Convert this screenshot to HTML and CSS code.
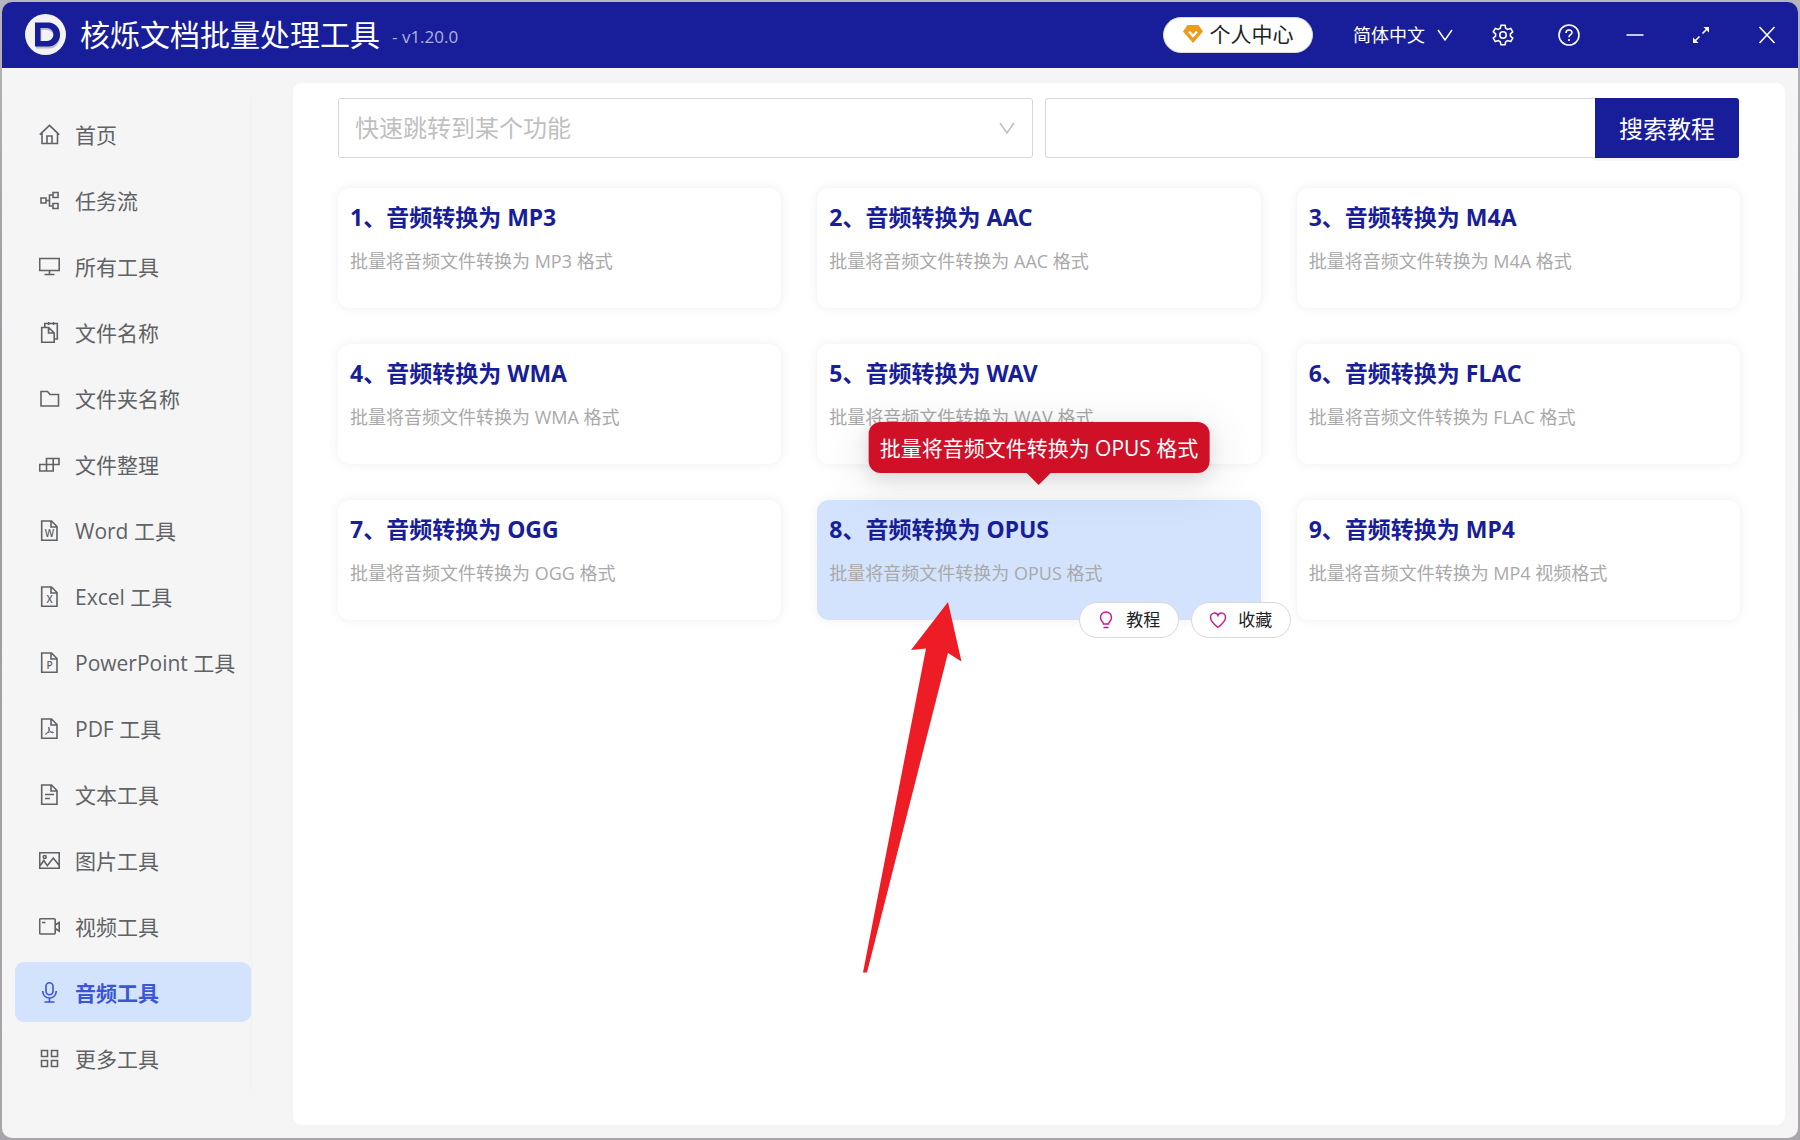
FILE: index.html
```html
<!DOCTYPE html>
<html lang="zh-CN">
<head>
<meta charset="utf-8">
<meta name="viewport" content="width=device-width, initial-scale=1">
<title>核烁文档批量处理工具</title>
<link rel="stylesheet" href="styles.css">
</head>
<body>
<div class="window">
  <header class="titlebar">
    <svg class="logo" viewBox="0 0 41 41" aria-hidden="true">
      <circle cx="20.500" cy="20.500" r="20.500" fill="#f3f3f3"/>
      <path fill-rule="evenodd" d="M11 10.500h13.500a10.500 12 0 0 1 0 24H11zM16.500 16v13h5.500a6.500 6.500 0 0 0 0-13z" fill="#bcbcc2"/>
      <path fill-rule="evenodd" d="M10 8.500h13.500a11.500 12 0 0 1 0 24H10zM15.500 14v13h6.500a6.500 6.500 0 0 0 0-13z" fill="#181d99"/>
    </svg>
    <h1 class="app-name">核烁文档批量处理工具</h1>
    <span class="version">- v1.20.0</span>
    <div class="actions">
      <button class="account" type="button">
        <svg class="gem" viewBox="0 0 20 18" aria-hidden="true"><path d="M4.500 0h11L20 6.500 10 18 0 6.500z" fill="#f09a1a"/><path d="M6 6.500l4 4.500 4-4.500" fill="none" stroke="#fff" stroke-width="2.400"/></svg>
        个人中心
      </button>
      <div class="language">
        <select class="language-select" aria-label="语言"><option>简体中文</option></select>
        <svg class="chevron" viewBox="0 0 16 16" aria-hidden="true"><path d="M1 3l7 10 7-10"/></svg>
      </div>
      <button class="icon-button" type="button" aria-label="设置">
        <svg viewBox="0 0 22 22"><path d="M9 1.200h4l.7 3 2 1.200 3-1 2 3.500-2.300 2v2.200l2.300 2-2 3.500-3-1-2 1.200-.7 3H9l-.7-3-2-1.200-3 1-2-3.500 2.300-2V9.900l-2.300-2 2-3.500 3 1 2-1.200z"/><circle cx="11" cy="11" r="3.200"/></svg>
      </button>
      <button class="icon-button" type="button" aria-label="帮助">
        <svg viewBox="0 0 22 22"><circle cx="11" cy="11" r="10"/><path d="M8 9c0-4 6-4 6-.5 0 2.300-3 2.200-3 4.700M11 15v2"/></svg>
      </button>
      <button class="icon-button" type="button" aria-label="最小化">
        <svg viewBox="0 0 22 22"><path d="M2.500 11h17"/></svg>
      </button>
      <button class="icon-button" type="button" aria-label="最大化">
        <svg viewBox="0 0 22 22"><path d="M12.500 9.500l5-5M9.500 12.500l-5 5"/><path d="M13.500 3H19v5.500zM3 13.500V19h5.500z" fill="currentColor" stroke="none"/></svg>
      </button>
      <button class="icon-button" type="button" aria-label="关闭">
        <svg viewBox="0 0 22 22"><path d="M3.500 3l15 16M18.500 3l-15 16"/></svg>
      </button>
    </div>
  </header>

  <div class="body">
    <nav class="sidebar">
      <a class="nav-item" href="#"><svg viewBox="0 0 21 21"><path d="M.8 10.600l9.700-9.300 9.700 9.300M3 9v10.500h15.500V9M8 19.500V12h5v7.500"/></svg>首页</a>
      <a class="nav-item" href="#"><svg viewBox="0 0 21 21"><path d="M2 8h5v5H2zM14 2.500h5v5h-5zM14 13.500h5v5h-5zM7 10.500h3.500M14 5h-3.500v11H14"/></svg>任务流</a>
      <a class="nav-item" href="#"><svg viewBox="0 0 21 21"><path d="M.7 2.500h19.500v12H.7zM10.500 14.500v4M5.500 18.500h10"/></svg>所有工具</a>
      <a class="nav-item" href="#"><svg viewBox="0 0 21 21"><path d="M2.700 5.500h7l5.500 5.500v9.300H2.700zM9.500 5.500V11h5.700M5.800 5.500v-4h12.500v15.500h-3M9.700 0v3M14.500 0v3"/></svg>文件名称</a>
      <a class="nav-item" href="#"><svg viewBox="0 0 21 21"><path d="M2 3.500h6.500l2.500 3h8.500v11.500H2z"/></svg>文件夹名称</a>
      <a class="nav-item" href="#"><svg viewBox="0 0 21 21"><path d="M7.500 4.500H20v6H7.500zM.7 10.500h13.500v6.500H.7zM14.200 4.500v6M7.500 10.500v6.500"/></svg>文件整理</a>
      <a class="nav-item" href="#"><svg viewBox="0 0 21 21"><path d="M2.700 1h9.800l5.500 5.500v13.700H2.700zM12 1v6h6"/><text x="10.500" y="16.500">W</text></svg>Word 工具</a>
      <a class="nav-item" href="#"><svg viewBox="0 0 21 21"><path d="M2.700 1h9.800l5.500 5.500v13.700H2.700zM12 1v6h6"/><text x="10.500" y="16.500">X</text></svg>Excel 工具</a>
      <a class="nav-item" href="#"><svg viewBox="0 0 21 21"><path d="M2.700 1h9.800l5.500 5.500v13.700H2.700zM12 1v6h6"/><text x="10.500" y="16.500">P</text></svg>PowerPoint 工具</a>
      <a class="nav-item" href="#"><svg viewBox="0 0 21 21"><path d="M2.700 1h9.800l5.500 5.500v13.700H2.700zM12 1v6h6"/><path class="thin" d="M9.700 9c1.500 2.500-.8 6-3.200 7.500-.8-1.500 6-3.500 8-2-1.500 1.300-5-2-4.800-5.500z"/></svg>PDF 工具</a>
      <a class="nav-item" href="#"><svg viewBox="0 0 21 21"><path d="M2.700 1h9.800l5.500 5.500v13.700H2.700zM12 1v6h6M6 10.500h9M6 14.500h5"/></svg>文本工具</a>
      <a class="nav-item" href="#"><svg viewBox="0 0 21 21"><path d="M.7 2.700h19.500v15.500H.7zM1.300 15.500l3.500-5 3.500 5.200 6-7.700 5.500 7"/><circle cx="5.700" cy="7" r="1.500"/></svg>图片工具</a>
      <a class="nav-item" href="#"><svg viewBox="0 0 21 21"><rect x=".7" y="2.700" width="15.500" height="15.300" rx="1"/><path d="M16.200 9l4-2.500v8.500l-4-2.500M3 6.500h3.500"/></svg>视频工具</a>
      <a class="nav-item active" href="#" aria-current="page"><svg viewBox="0 0 21 21"><rect x="7" y=".8" width="7" height="12" rx="3.500"/><path d="M3.700 9c0 9.300 13.600 9.300 13.600 0M10.500 16v4M5.500 20h10"/></svg>音频工具</a>
      <a class="nav-item" href="#"><svg viewBox="0 0 21 21"><path d="M2.500 2.500h6v6h-6zM12.500 2.500h6v6h-6zM2.500 12.500h6v6h-6zM12.500 12.500h6v6h-6z"/></svg>更多工具</a>
    </nav>

    <main class="panel">
      <div class="toolbar">
        <div class="jump">
          <select class="jump-select" aria-label="快速跳转到某个功能"><option>快速跳转到某个功能</option></select>
          <svg class="chevron" viewBox="0 0 16 16" aria-hidden="true"><path d="M1 3l7 10 7-10"/></svg>
        </div>
        <form class="search">
          <input class="search-input" type="text" aria-label="搜索教程">
          <button class="search-button" type="button">搜索教程</button>
        </form>
      </div>

      <section class="cards">
        <article class="card"><h2>1、音频转换为 MP3</h2><p>批量将音频文件转换为 MP3 格式</p></article>
        <article class="card"><h2>2、音频转换为 AAC</h2><p>批量将音频文件转换为 AAC 格式</p></article>
        <article class="card"><h2>3、音频转换为 M4A</h2><p>批量将音频文件转换为 M4A 格式</p></article>
        <article class="card"><h2>4、音频转换为 WMA</h2><p>批量将音频文件转换为 WMA 格式</p></article>
        <article class="card"><h2>5、音频转换为 WAV</h2><p>批量将音频文件转换为 WAV 格式</p></article>
        <article class="card"><h2>6、音频转换为 FLAC</h2><p>批量将音频文件转换为 FLAC 格式</p></article>
        <article class="card"><h2>7、音频转换为 OGG</h2><p>批量将音频文件转换为 OGG 格式</p></article>
        <article class="card hovered">
          <h2>8、音频转换为 OPUS</h2><p>批量将音频文件转换为 OPUS 格式</p>
          <div class="tooltip" role="tooltip">批量将音频文件转换为 OPUS 格式</div>
          <div class="card-actions">
            <button class="chip" type="button"><svg viewBox="0 0 18 18"><path d="M6.500 13c0-2-3-3-3-6.500a5.500 5.500 0 0 1 11 0C14.500 10 11.500 11 11.500 13zM6.500 16.500h5"/></svg>教程</button>
            <button class="chip" type="button"><svg viewBox="0 0 18 18"><path d="M9 16.500C4 12.500 1.500 9.500 1.500 6.500c0-5 6-6 7.500-2 1.500-4 7.500-3 7.500 2 0 3-2.500 6-7.500 10z"/></svg>收藏</button>
          </div>
          <svg class="pointer" viewBox="0 0 99 371" aria-hidden="true"><path d="M85 0l13.500 59.500L85 51 4 370.500H0L63 46.500l-15 1.500z"/></svg>
        </article>
        <article class="card"><h2>9、音频转换为 MP4</h2><p>批量将音频文件转换为 MP4 视频格式</p></article>
      </section>
    </main>
  </div>
</div>
</body>
</html>
```
FILE: styles.css
```css
* {
  box-sizing: border-box;
}

:root {
  --brand: #181d99;
  --surface: #f5f5f5;
  --highlight: #d3e3fd;
}

body {
  margin: 0;
  min-height: 100vh;
  padding: 2px;
  display: flex;
  background: linear-gradient(#b6b6ba, #9a9aa0 30%, #a8a6aa);
  font-family: "Open Sans", "Noto Sans CJK SC", sans-serif;
}

button,
select,
input {
  font-family: inherit;
  margin: 0;
}

button,
select {
  cursor: pointer;
}

h1,
h2,
p {
  margin: 0;
}

svg {
  flex: none;
  fill: none;
  stroke: currentColor;
}

.window {
  flex: 1;
  min-width: 0;
  display: flex;
  flex-direction: column;
  border-radius: 10px;
  overflow: hidden;
  background: var(--surface);
}

/* Title bar */
.titlebar {
  height: 66px;
  padding: 0 20px 0 23px;
  display: flex;
  align-items: center;
  background: var(--brand);
  color: #fff;
}

.logo {
  width: 41px;
  height: 41px;
  margin-bottom: 2px;
  stroke: none;
}

.app-name {
  margin-left: 14px;
  font-size: 30px;
  line-height: 40px;
  font-weight: 400;
  white-space: nowrap;
}

.version {
  margin-left: 12px;
  padding-top: 4px;
  font-size: 17px;
  line-height: 24px;
  color: #b0b2dc;
  white-space: nowrap;
}

.actions {
  margin-left: auto;
  display: flex;
  align-items: center;
  gap: 44px;
}

.account {
  width: 150px;
  height: 36px;
  padding: 0 0 2px;
  display: flex;
  align-items: center;
  justify-content: center;
  gap: 7px;
  border: 1px solid #d9d9d9;
  border-radius: 18px;
  background: #fff;
  color: #222;
  font-size: 21px;
  line-height: 28px;
  white-space: nowrap;
}

.gem {
  width: 20px;
  height: 18px;
  stroke: none;
}

.language {
  position: relative;
  margin: 0 -5px 0 -4px;
  display: flex;
  align-items: center;
}

.language-select {
  width: 100px;
  height: 32px;
  padding: 0;
  appearance: none;
  border: 0;
  background: transparent;
  color: #fff;
  font-size: 18px;
  line-height: 28px;
}

.language-select option {
  color: #222;
}

.chevron {
  position: absolute;
  width: 16px;
  height: 16px;
  stroke-width: 1.5;
  pointer-events: none;
}

.language .chevron {
  right: 0;
}

.icon-button {
  width: 22px;
  height: 22px;
  padding: 0;
  border: 0;
  background: transparent;
  color: #fff;
}

.icon-button svg {
  display: block;
  width: 22px;
  height: 22px;
  stroke-width: 1.6;
}

/* Body */
.body {
  flex: 1;
  display: flex;
  gap: 41px;
  padding: 15px 13px 13px;
}

.sidebar {
  width: 237px;
  flex: none;
  margin: 15px 0 35px;
  padding-top: 6px;
  display: flex;
  flex-direction: column;
  gap: 6px;
  border-right: 1px solid #f0f0f0;
}

.nav-item {
  height: 60px;
  padding: 1px 0 0 24px;
  display: flex;
  align-items: center;
  gap: 15px;
  border-radius: 9px;
  color: #606266;
  font-size: 21px;
  line-height: 30px;
  text-decoration: none;
  white-space: nowrap;
}

.nav-item svg {
  width: 21px;
  height: 21px;
  stroke-width: 1.6;
}

.nav-item text {
  fill: currentColor;
  stroke: none;
  font-size: 10px;
  font-weight: 600;
  text-anchor: middle;
}

.nav-item .thin {
  stroke-width: 1;
}

.nav-item.active {
  background: var(--highlight);
  color: #3a55d6;
  font-weight: 700;
}

.panel {
  flex: 1;
  min-width: 0;
  padding: 15px 45px;
  border-radius: 9px;
  background: #fff;
}

.toolbar {
  padding-right: 1px;
  display: grid;
  grid-template-columns: 1fr 1fr;
  gap: 12px;
}

.jump {
  position: relative;
  display: flex;
  align-items: center;
}

.jump-select {
  width: 100%;
  height: 60px;
  padding: 0 16px 2px;
  appearance: none;
  border: 1px solid #d9d9d9;
  border-radius: 3px;
  background: #fff;
  color: #bfbfbf;
  font-size: 24px;
}

.jump .chevron {
  right: 18px;
  color: #bfbfbf;
}

.search {
  display: flex;
}

.search-input {
  flex: 1;
  min-width: 0;
  height: 60px;
  padding: 0 16px;
  border: 1px solid #d9d9d9;
  border-right: 0;
  border-radius: 3px 0 0 3px;
  font-size: 24px;
}

.search-button {
  width: 144px;
  height: 60px;
  padding: 0 0 2px;
  border: 0;
  border-radius: 0 3px 3px 0;
  background: var(--brand);
  box-shadow: 0 3px 0 rgba(0, 0, 0, 0.04);
  color: #fff;
  font-size: 24px;
}

/* Cards */
.cards {
  margin-top: 30px;
  display: grid;
  grid-template-columns: repeat(3, 1fr);
  gap: 36px;
}

.card {
  position: relative;
  min-height: 120px;
  padding: 11px 12px;
  border-radius: 12px;
  background: #fff;
  box-shadow: 0 0 12px rgba(0, 0, 0, 0.07);
}

.card h2 {
  color: var(--brand);
  font-family: "Noto Sans", "Noto Sans CJK SC", sans-serif;
  font-size: 23px;
  line-height: 36px;
  font-weight: 700;
}

.card p {
  margin-top: 12px;
  color: #a9a9a9;
  font-size: 18px;
  line-height: 28px;
}

.card.hovered {
  background: var(--highlight);
  z-index: 1;
}

.tooltip {
  position: absolute;
  left: 50%;
  bottom: calc(100% + 27px);
  padding: 11px 11px 9px;
  transform: translateX(-50%);
  border-radius: 12px;
  background: #cf1027;
  box-shadow: 0 9px 42px 12px rgba(0, 0, 0, 0.06), 0 6px 18px rgba(0, 0, 0, 0.1);
  color: #fff;
  font-size: 21px;
  line-height: 31px;
  white-space: nowrap;
}

.tooltip::after {
  content: "";
  position: absolute;
  top: 100%;
  left: calc(50% - 12px);
  border: 12px solid transparent;
  border-top-color: #cf1027;
  border-bottom: 0;
}

.card-actions {
  position: absolute;
  right: -30px;
  bottom: -18px;
  display: flex;
  gap: 12px;
}

.chip {
  width: 100px;
  height: 36px;
  padding: 0;
  display: flex;
  align-items: center;
  justify-content: center;
  gap: 11px;
  border: 1px solid #d9d9d9;
  border-radius: 18px;
  background: #fff;
  color: #222;
  font-size: 17px;
  line-height: 24px;
}

.chip svg {
  width: 18px;
  height: 18px;
  color: #d0128c;
  stroke-width: 1.4;
}

.pointer {
  position: absolute;
  left: 46px;
  top: 102px;
  width: 99px;
  height: 371px;
  fill: #ee1c25;
  stroke: none;
  pointer-events: none;
}
```
